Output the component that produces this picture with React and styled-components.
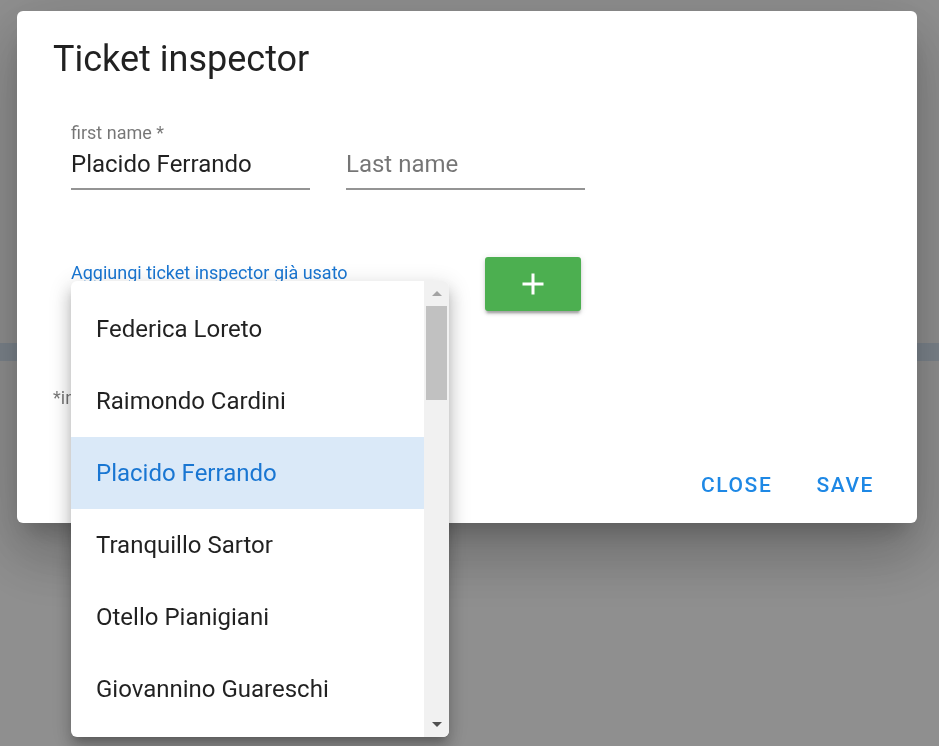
import React from 'react'
import styled, { createGlobalStyle } from 'styled-components'

const GlobalStyle = createGlobalStyle`
  body {
    margin: 0;
    font-family: Roboto, "Liberation Sans", sans-serif;
  }
`

const Page = styled.div`
  height: 746px;
  background: #ffffff;
  padding-top: 343px;
  box-sizing: border-box;
`

const Band = styled.div`
  height: 18px;
  background: #dceaf8;
`

const Overlay = styled.div`
  position: fixed;
  inset: 0;
  background: rgba(0, 0, 0, 0.44);
  padding: 11px 0 0 17px;
`

const Dialog = styled.div`
  width: 900px;
  background: #fff;
  border-radius: 6px;
  box-shadow: 0 16px 22px -10px rgba(0, 0, 0, 0.2),
    0 36px 57px 4px rgba(0, 0, 0, 0.14),
    0 13px 69px 12px rgba(0, 0, 0, 0.12);
`

const Title = styled.h2`
  margin: 0;
  padding: 24px 36px 0;
  font-size: 36px;
  line-height: 48px;
  font-weight: 400;
  color: rgba(0, 0, 0, 0.87);
`

const Content = styled.div`
  padding: 0 36px;
`

const Row = styled.div`
  display: flex;
  gap: 36px;
  padding-left: 18px;
  margin-top: ${p => p.$top}px;
`

const Field = styled.div`
  width: ${p => p.$width}px;
  display: flex;
  flex-direction: column;
  position: relative;
`

const Label = styled.label`
  font-size: 18px;
  line-height: 21px;
  margin-top: ${p => p.$top || 0}px;
  color: ${p => (p.$focused ? '#1976d2' : 'rgba(0, 0, 0, 0.54)')};
  white-space: nowrap;
`

const Input = styled.div`
  margin-top: 6.5px;
  font-size: 24px;
  line-height: 28.5px;
  padding-bottom: 10px;
  border-bottom: 2px solid rgba(0, 0, 0, 0.42);
  color: ${p => (p.$placeholder ? 'rgba(0, 0, 0, 0.54)' : 'rgba(0, 0, 0, 0.87)')};
`

const AddButton = styled.button`
  width: 96px;
  height: 54px;
  border: 0;
  border-radius: 3px;
  background: #4caf50;
  color: #fff;
  display: flex;
  align-items: center;
  justify-content: center;
  padding: 0;
  box-shadow: 0 4px 2px -2px rgba(0, 0, 0, 0.2),
    0 3px 3px 0 rgba(0, 0, 0, 0.14),
    0 1px 7px 0 rgba(0, 0, 0, 0.12);
`

const Note = styled.p`
  margin: 76px 0 0;
  font-size: 18px;
  line-height: 21px;
  color: rgba(0, 0, 0, 0.54);
`

const Actions = styled.div`
  display: flex;
  justify-content: flex-end;
  gap: 20px;
  margin-top: 50px;
  padding: 0 31px 11px;
`

const TextButton = styled.button`
  height: 54px;
  padding: 0 12px;
  border: 0;
  background: transparent;
  font-family: Roboto, "Liberation Sans", sans-serif;
  font-size: 21px;
  font-weight: 500;
  letter-spacing: 1.6px;
  color: #1e88e5;
  text-transform: uppercase;
`

const Menu = styled.div`
  position: absolute;
  top: 24px;
  left: 0;
  width: 378px;
  height: 456px;
  background: #fff;
  border-radius: 6px;
  overflow: hidden;
  display: flex;
  z-index: 10;
  box-shadow: 0 7px 8px -4px rgba(0, 0, 0, 0.2),
    0 12px 15px 2px rgba(0, 0, 0, 0.14),
    0 5px 21px 3px rgba(0, 0, 0, 0.12);
`

const List = styled.ul`
  flex: 1;
  margin: 0;
  padding: 12px 0 0;
  list-style: none;
  overflow: hidden;
`

const Item = styled.li`
  height: 72px;
  padding-left: 25px;
  display: flex;
  align-items: center;
  font-size: 24px;
  color: ${p => (p.$selected ? '#1976d2' : 'rgba(0, 0, 0, 0.87)')};
  background: ${p => (p.$selected ? '#dae9f8' : 'transparent')};
`

const Scrollbar = styled.div`
  width: 25px;
  background: #f1f1f1;
  display: flex;
  flex-direction: column;
`

const ArrowBox = styled.div`
  height: 25px;
  display: flex;
  align-items: center;
  justify-content: center;
  margin-top: ${p => (p.$push ? 'auto' : '0')};
`

const Arrow = styled.div`
  width: 0;
  height: 0;
  border-left: 5.5px solid transparent;
  border-right: 5.5px solid transparent;
  ${p => (p.$down
    ? 'border-top: 5.5px solid #505050;'
    : 'border-bottom: 5.5px solid #a3a3a3;')}
`

const Thumb = styled.div`
  height: 94px;
  margin: 0 2px;
  background: #c1c1c1;
`

const names = [
  'Federica Loreto',
  'Raimondo Cardini',
  'Placido Ferrando',
  'Tranquillo Sartor',
  'Otello Pianigiani',
  'Giovannino Guareschi',
]

const PlusIcon = () => (
  <svg width="36" height="36" viewBox="0 0 24 24" fill="currentColor">
    <path d="M19 13h-6v6h-2v-6H5v-2h6V5h2v6h6v2z" />
  </svg>
)

const App = () => {
  return (
    <>
      <GlobalStyle />
      <Page>
        <Band />
      </Page>
      <Overlay>
        <Dialog>
          <Title>Ticket inspector</Title>
          <Content>
            <Row $top={39}>
              <Field $width={239}>
                <Label>first name *</Label>
                <Input>Placido Ferrando</Input>
              </Field>
              <Field $width={239}>
                <Label>{'\u00a0'}</Label>
                <Input $placeholder>Last name</Input>
              </Field>
            </Row>
            <Row $top={67}>
              <Field $width={378}>
                <Label $top={5} $focused>Aggiungi ticket inspector già usato</Label>
                <Menu>
                  <List>
                    {names.map(n => (
                      <Item key={n} $selected={n === 'Placido Ferrando'}>{n}</Item>
                    ))}
                  </List>
                  <Scrollbar>
                    <ArrowBox><Arrow /></ArrowBox>
                    <Thumb />
                    <ArrowBox $push><Arrow $down /></ArrowBox>
                  </Scrollbar>
                </Menu>
              </Field>
              <AddButton>
                <PlusIcon />
              </AddButton>
            </Row>
            <Note>*inserire almeno un ticket inspector</Note>
          </Content>
          <Actions>
            <TextButton>Close</TextButton>
            <TextButton>Save</TextButton>
          </Actions>
        </Dialog>
      </Overlay>
    </>
  )
}

export default App
